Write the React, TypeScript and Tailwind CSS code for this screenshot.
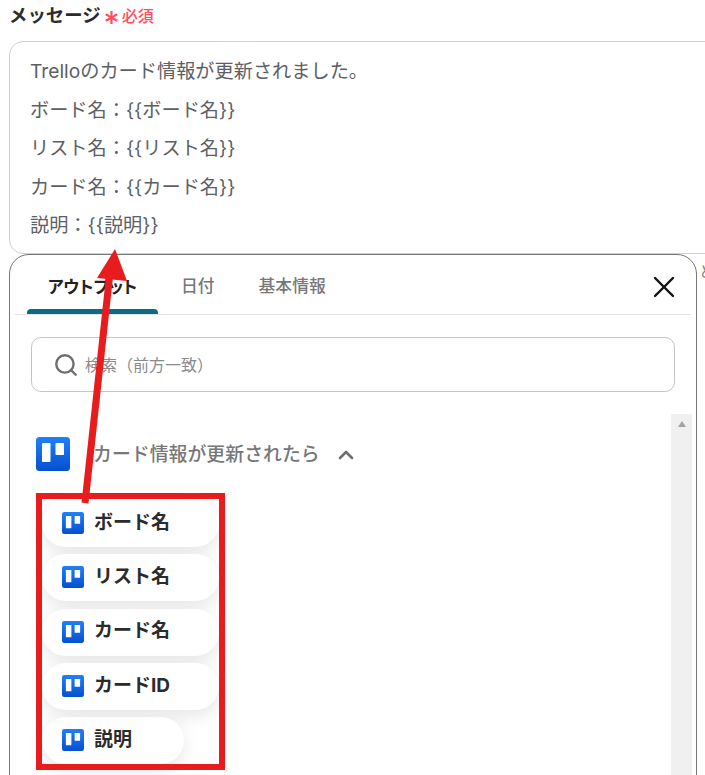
import React from 'react';
import { ChevronUp, Search, X } from 'lucide-react';

const FONT = "font-['Inter','Noto_Sans_CJK_JP',sans-serif]";

const MESSAGE_LINES = [
  'Trelloのカード情報が更新されました。',
  'ボード名：{{ボード名}}',
  'リスト名：{{リスト名}}',
  'カード名：{{カード名}}',
  '説明：{{説明}}',
];

const OUTPUTS = [
  { label: 'ボード名', width: 'w-[177px]' },
  { label: 'リスト名', width: 'w-[177px]' },
  { label: 'カード名', width: 'w-[177px]' },
  { label: 'カードID', width: 'w-[177px]' },
  { label: '説明', width: 'w-[142px]' },
];

const TrelloIcon = ({ className }: { className: string }) => (
  <svg viewBox="0 0 34 34" className={className}>
    <defs>
      <linearGradient id="trello-blue" x1="0" y1="0" x2="0" y2="1">
        <stop offset="0" stopColor="#1f80fb" />
        <stop offset="1" stopColor="#0650cf" />
      </linearGradient>
    </defs>
    <rect width="34" height="34" rx="3.5" fill="url(#trello-blue)" />
    <rect x="6" y="6" width="8.5" height="19" rx="0.8" fill="#fff" />
    <rect x="19.5" y="6" width="8.5" height="12" rx="0.8" fill="#fff" />
  </svg>
);

export default function App() {
  return (
    <div className={`relative w-[705px] h-[775px] overflow-hidden bg-white ${FONT}`}>
      {/* Field label */}
      <div className="h-[41px] pl-[9px] pt-[2px] flex items-start">
        <span className="text-[18.4px] leading-[26px] font-bold text-[#2b2b2b]">メッセージ</span>
        <span className="ml-[3px] mt-[6px] text-[32px] leading-[32px] text-[#ff4d5e]">*</span>
        <span className="ml-[2px] mt-[3px] text-[16px] leading-[22px] font-medium text-[#ff4d5e]">必須</span>
      </div>

      {/* Message box, runs off the right edge */}
      <div className="ml-[9px] w-[720px] h-[213px] box-border border border-[#ccd2da] rounded-[14px] pl-[20px] pt-[11px] text-[19.2px] text-[#5c6066]">
        {MESSAGE_LINES.map((line) => (
          <p key={line} className="h-[38.6px] leading-[37.6px] whitespace-nowrap">{line}</p>
        ))}
      </div>

      {/* Variable picker */}
      <div className="ml-[9px] w-[688px] h-[560px] box-border border border-[#777] rounded-t-[20px] bg-white flex flex-col">
        <div className="mx-[5px] mt-[1px] h-[59px] border-b border-[#e3e3e3] flex items-end relative">
          <div className="ml-[12px] w-[131px] h-[54px] flex flex-col items-center justify-between">
            <span className="mt-[15px] text-[16.8px] leading-[24px] font-bold text-[#222] [font-feature-settings:'palt']">アウトプット</span>
            <div className="w-full h-[5px] rounded-t-[4px] bg-[#0b6b85]" />
          </div>
          <div className="ml-[23px] h-[54px] pb-[1px] flex items-center text-[16.8px] font-medium text-[#77777a]">日付</div>
          <div className="ml-[44px] h-[54px] pb-[1px] flex items-center text-[16.8px] font-medium text-[#77777a]">基本情報</div>
          <X className="absolute left-[631px] top-[13px] w-[36px] h-[36px] text-[#111]" strokeWidth={1.6} />
        </div>

        <div className="ml-[21px] mt-[22px] w-[644px] h-[55px] box-border border border-[#c6c6c6] rounded-[10px] flex items-center pl-[21px]">
          <Search className="w-[26px] h-[26px] text-[#6f6f6f]" strokeWidth={2.2} />
          <span className="ml-[6px] text-[16px] text-[#8b8b8b]">検索（前方一致）</span>
        </div>

        <div className="flex mt-[22px] flex-1 relative">
          <div className="flex-1 pl-[26px] pt-[23px]">
            <div className="flex items-center h-[34px]">
              <TrelloIcon className="w-[34px] h-[34px]" />
              <span className="ml-[23px] pt-[2px] text-[18.9px] font-medium text-[#77777a]">カード情報が更新されたら</span>
              <ChevronUp className="ml-[14px] mt-[2px] w-[24px] h-[24px] text-[#6f6f6f]" strokeWidth={2.6} />
            </div>
            <div className="mt-[29px] ml-[6px] flex flex-col gap-[7.25px]">
              {OUTPUTS.map((item) => (
                <div
                  key={item.label}
                  className={`${item.width} h-[47px] rounded-full bg-white shadow-[0_6px_18px_rgba(0,0,0,0.1)] flex items-center pl-[20px] pb-[1px]`}
                >
                  <TrelloIcon className="w-[22px] h-[22px]" />
                  <span className="ml-[10px] text-[19px] font-bold text-[#2b2b2b]">{item.label}</span>
                </div>
              ))}
            </div>
          </div>
          <div className="mr-[4px] w-[21px] bg-[#f0f0f0] pt-[7px] flex justify-center self-stretch">
            <div className="w-0 h-0 border-x-[4.5px] border-x-transparent border-b-[6px] border-b-[#a3a3a3]" />
          </div>
        </div>
      </div>

      {/* Clipped text behind the picker */}
      <span className="absolute left-[699px] top-[262px] text-[15px] leading-[20px] text-[#777]">と</span>

      {/* Annotation: red frame */}
      <div className="absolute left-[36px] top-[493px] w-[189px] h-[277px] box-border border-[6px] border-[#e81c1c]" />

      {/* Annotation: red arrow */}
      <svg className="absolute left-0 top-0 pointer-events-none" width="705" height="775">
        <line x1="85" y1="503" x2="110" y2="272" stroke="#e81c1c" strokeWidth="7" />
        <polygon points="115,249 127,281 97,278" fill="#e81c1c" />
      </svg>
    </div>
  );
}
